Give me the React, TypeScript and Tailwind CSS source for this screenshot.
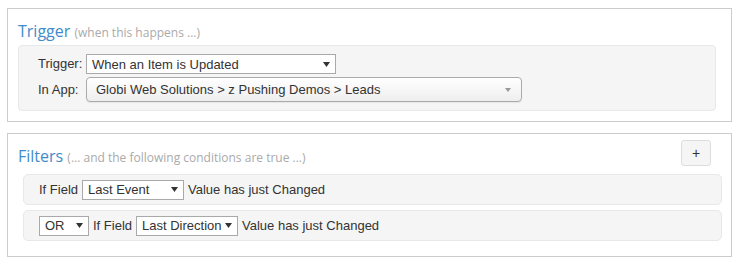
import type { ReactNode } from 'react';

function Arrow({ color = '#333', w = 7, h = 5 }: { color?: string; w?: number; h?: number }) {
  return (
    <svg width={w} height={h} viewBox={`0 0 ${w} ${h}`} className="shrink-0">
      <polygon points={`0,0 ${w},0 ${w / 2},${h}`} fill={color} />
    </svg>
  );
}

function Select({ value, className = '' }: { value: string; className?: string }) {
  return (
    <div
      className={`flex h-[20px] items-center justify-between border border-[#a9a9a9] bg-white pl-[5px] pr-[5px] ${className}`}
    >
      <span className="whitespace-nowrap leading-none">{value}</span>
      <Arrow />
    </div>
  );
}

function Panel({ children, className = '' }: { children: ReactNode; className?: string }) {
  return <section className={`w-[725px] border border-[#ccc] bg-white ${className}`}>{children}</section>;
}

function Title({ main, sub }: { main: string; sub: string }) {
  return (
    <h2 className="h-[20px] font-['Open_Sans',sans-serif] text-[16px] leading-[20px]">
      <span className="text-[#428bca]">{main}</span>{' '}
      <span className="text-[12px] text-[#aaa]">{sub}</span>
    </h2>
  );
}

function FilterRow({ children }: { children: ReactNode }) {
  return (
    <div className="flex h-[31px] items-center gap-1 rounded-[5px] border border-[#e8e8e8] bg-[#f5f5f5] pl-[15px]">
      {children}
    </div>
  );
}

export default function App() {
  return (
    <div className="h-[265px] w-[739px] bg-white pl-[7px] pt-[8px] font-['Liberation_Sans',Arial,sans-serif] text-[13px] text-[#333]">
      <Panel className="pb-[10px] pl-[10px] pr-[15px] pt-[12px]">
        <Title main="Trigger" sub="(when this happens ...)" />
        <div className="mt-[4px] rounded-[4px] border border-[#e8e8e8] bg-[#f5f5f5] pb-[8px] pl-[19px] pt-[8px]">
          <div className="flex items-center">
            <span className="w-[48px]">Trigger:</span>
            <Select value="When an Item is Updated" className="w-[250px]" />
          </div>
          <div className="mt-[3px] flex items-center">
            <span className="w-[48px]">In App:</span>
            <div className="flex h-[25px] w-[436px] items-center justify-between rounded-[4px] border border-[#aaa] bg-gradient-to-b from-white to-[#eee] pl-[9px] pr-[10px] shadow-[0_1px_1px_rgba(0,0,0,0.06)]">
              <span className="whitespace-nowrap">Globi Web Solutions &gt; z Pushing Demos &gt; Leads</span>
              <Arrow color="#999" w={6} h={4} />
            </div>
          </div>
        </div>
      </Panel>

      <Panel className="mt-[11px] pb-[15px] pl-[10px] pr-[9px] pt-[6px]">
        <div className="flex items-start justify-between">
          <div className="pt-[6px]">
            <Title main="Filters" sub="(... and the following conditions are true ...)" />
          </div>
          <button className="mr-[11px] flex h-[26px] w-[30px] items-center justify-center rounded-[3px] border border-[#ddd] bg-[#f5f5f5] text-[14px] leading-none text-[#333]">
            +
          </button>
        </div>
        <div className="ml-[5px] mt-[8px] flex flex-col gap-[5px]">
          <FilterRow>
            <span>If Field</span>
            <Select value="Last Event" className="w-[102px]" />
            <span>Value has just Changed</span>
          </FilterRow>
          <FilterRow>
            <Select value="OR" className="w-[50px]" />
            <span>If Field</span>
            <Select value="Last Direction" className="w-[102px]" />
            <span>Value has just Changed</span>
          </FilterRow>
        </div>
      </Panel>
    </div>
  );
}
